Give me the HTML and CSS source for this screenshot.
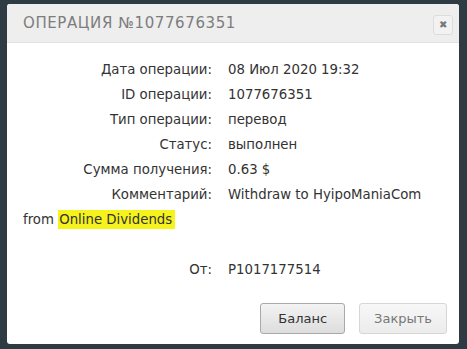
FILE: index.html
```html
<!DOCTYPE html>
<html lang="ru">
<head>
    <meta charset="UTF-8">
    <title>Операция №1077676351</title>
    <link rel="stylesheet" href="styles.css">
</head>
<body>
    <div class="modal">
        <div class="modal-header">
            <h3>Операция №1077676351</h3>
            <button class="close-x">&#10006;</button>
        </div>
        <div class="modal-body">
            <div class="row"><span class="label">Дата операции:</span><span>08 Июл 2020 19:32</span></div>
            <div class="row"><span class="label">ID операции:</span><span>1077676351</span></div>
            <div class="row"><span class="label">Тип операции:</span><span>перевод</span></div>
            <div class="row"><span class="label">Статус:</span><span>выполнен</span></div>
            <div class="row"><span class="label">Сумма получения:</span><span>0.63 $</span></div>
            <div class="row"><span class="label">Комментарий:</span><span>Withdraw to HyipoManiaCom</span></div>
            <div class="note">from <mark>Online Dividends</mark></div>
            <div class="row empty"></div>
            <div class="row"><span class="label">От:</span><span>P1017177514</span></div>
        </div>
        <div class="modal-footer">
            <button class="btn btn-dark">Баланс</button>
            <button class="btn">Закрыть</button>
        </div>
    </div>
</body>
</html>
```
FILE: styles.css
```css
html, body {
    margin: 0;
    height: 100%;
}
body {
    background: #2e3b42;
    padding: 4px 8px 5px 7px;
    box-sizing: border-box;
    font-family: 'DejaVu Sans', sans-serif;
    font-size: 13.3px;
    color: #333;
}
.modal {
    background: white;
    border-radius: 3px;
    height: 100%;
    display: flex;
    flex-direction: column;
}
.modal-header {
    background: #eeeeee;
    height: 38px;
    border-bottom: 1px solid #e2e2e2;
    border-radius: 3px 3px 0 0;
    display: flex;
    align-items: center;
    justify-content: space-between;
    padding: 0 6px 0 16px;
}
.modal-header h3 {
    margin: 0;
    font-family: 'DejaVu Sans', sans-serif;
    font-weight: normal;
    font-size: 15px;
    letter-spacing: 0.6px;
    text-transform: uppercase;
    color: #7d7d7d;
}
.close-x {
    width: 20px;
    height: 20px;
    padding: 0;
    border: 1px solid #dcdcdc;
    border-radius: 3px;
    background: #f2f2f2;
    color: #777;
    font-size: 10px;
    line-height: 18px;
    margin-top: 4px;
}
.modal-body {
    padding: 14px 16px 0;
    flex: 1;
}
.row {
    display: grid;
    grid-template-columns: 189px auto;
    column-gap: 16px;
    line-height: 25px;
    height: 25px;
}
.label {
    text-align: right;
}
.note {
    line-height: 25px;
}
mark {
    background: #f6f21c;
    color: #333;
    padding: 2px 3px 2px 1px;
}
.modal-footer {
    display: flex;
    justify-content: flex-end;
    gap: 14px;
    padding: 0 12px 10px;
}
.btn {
    font-family: 'DejaVu Sans', sans-serif;
    font-size: 13px;
    color: #777;
    height: 31px;
    padding: 0 14px;
    border: 1px solid #d6d6d6;
    border-radius: 3px;
    background: linear-gradient(#f7f7f7, #ececec);
}
.btn-dark {
    color: #333;
    border-color: #a9a9a9;
    background: linear-gradient(#f3f3f3, #dddddd);
    padding: 0 17px;
}
```
